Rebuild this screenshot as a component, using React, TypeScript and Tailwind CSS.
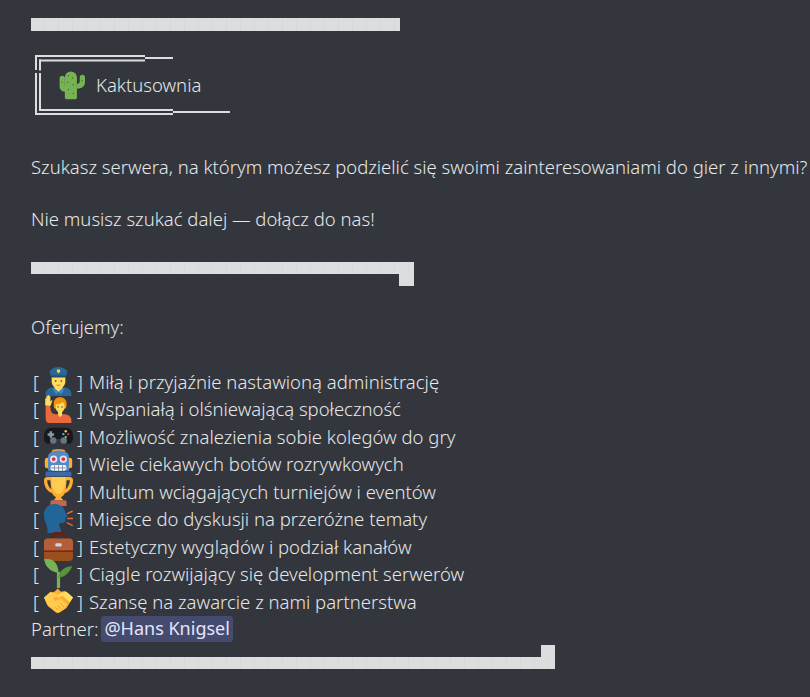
const seam = "bg-[#dcddde] bg-[repeating-linear-gradient(90deg,#dcddde_0px,#dcddde_13px,#d7d8da_13px,#d7d8da_14px)]";

function Bar({ width, tail, tall }: { width: string; tail?: "up" | "down"; tall?: boolean }) {
  return (
    <div className={`flex flex-col ${width}`}>
      {tail === "up" && <div className="w-[14px] h-3 self-end bg-[#dcddde]" />}
      <div className={`${tall ? "h-[13px]" : "h-3"} w-full ${seam}`} />
      {tail === "down" && <div className="w-[15px] h-3 self-end bg-[#dcddde]" />}
    </div>
  );
}

const Frame = () => (
  <svg width="210" height="64" viewBox="0 0 210 64" className="absolute left-0 top-0" fill="#dcddde">
    <rect x="4" y="0" width="110" height="2" />
    <rect x="114" y="2" width="28" height="2" />
    <rect x="8" y="4.500" width="106" height="2" />
    <rect x="4" y="0" width="2" height="15" />
    <rect x="8" y="4.500" width="2" height="11" />
    <rect x="4" y="18" width="2" height="27" />
    <rect x="8" y="18" width="2" height="27" />
    <rect x="4" y="45" width="2" height="15" />
    <rect x="8" y="45" width="2" height="11" />
    <rect x="8" y="54" width="134" height="2" />
    <rect x="4" y="58" width="138" height="2" />
    <rect x="142" y="56" width="57" height="2" />
  </svg>
);

const Cactus = () => (
  <svg width="29" height="29" viewBox="0 0 36 36">
    <path fill="#77B255" d="M8.500 8a7.500 7.500 0 0 1 15 0v25a2 2 0 0 1-2 2h-11a2 2 0 0 1-2-2V8z" />
    <path fill="#77B255" d="M2 9a3.200 3.200 0 0 1 6.500 0v9c0 1 1 2 2 2v6c-5 0-8.500-2-8.500-7V9zM27 8a3.200 3.200 0 0 1 6.500 0v6c0 5-4 8-10 8v-6c2 0 3.500-1 3.500-3V8z" />
    <g fill="#3E721D">
      <circle cx="13" cy="6" r=".9" /><circle cx="18" cy="9" r=".9" /><circle cx="12" cy="14" r=".9" /><circle cx="19" cy="17" r=".9" /><circle cx="13" cy="23" r=".9" /><circle cx="19" cy="28" r=".9" /><circle cx="5" cy="14" r=".8" /><circle cx="30" cy="12" r=".8" />
    </g>
  </svg>
);

const Police = () => (
  <svg width="29" height="29" viewBox="0 0 36 36" className="overflow-visible">
    <path fill="#2A6797" d="M2 36v-3c0-5 5-8 9-8h14c4 0 9 3 9 8v3H2z" />
    <path fill="#FFDC5D" d="M13 21h10v6l-5 4-5-4z" />
    <path fill="#4289C1" d="M13 26l5 5-3 3-4-6zM23 26l-5 5 3 3 4-6z" />
    <path fill="#FFDC5D" d="M9.500 12h17v6c0 5-4 8.500-8.500 8.500S9.500 23 9.500 18z" />
    <circle cx="14.500" cy="17.500" r="1" fill="#662113" /><circle cx="21.500" cy="17.500" r="1" fill="#662113" />
    <path fill="#C1694F" d="M15 22h6c-1 1.500-5 1.500-6 0z" />
    <path fill="#2A6797" d="M7 5c2-3 7-5 11-5s9 2 11 5c0 2-1 5-2 7H9C8 10 7 7 7 5z" />
    <path fill="#1C4F75" d="M9 10.500h18v2.500H9z" />
    <path fill="#FFCC4D" d="M16 3h4v3l-2 2-2-2z" />
  </svg>
);

const Raise = () => (
  <svg width="29" height="29" viewBox="0 0 36 36">
    <path fill="#E9683C" d="M2 30V13l5 0 2 9c1 2 3 3 5 3h11c5 0 9 3 9 7v4H6c-2 0-4-2-4-6z" />
    <path fill="#FFDC5D" d="M1.500 14V6c0-.8 1.500-.8 1.500 0V3c0-.9 1.600-.9 1.600 0V2c0-.9 1.700-.9 1.700 0v1c0-.9 1.600-.7 1.600.2V10l1-2c.6-.8 1.800-.2 1.400.7L8 15l-6.500-1z" />
    <path fill="#FFDC5D" d="M17.500 21h5v5l-2.500 3-2.500-3z" />
    <path fill="#F4900C" d="M12 12c0-5 3-8 8-8s8 3 8 8c0 2 0 4-1 6H13c-1-2-1-4-1-6z" />
    <path fill="#FFDC5D" d="M14.500 13c2 0 7-1 9-3l2 3v4c0 3-3 6-5.500 6s-5.500-3-5.500-6v-4z" />
    <circle cx="17.500" cy="16" r=".9" fill="#662113" /><circle cx="22.500" cy="16" r=".9" fill="#662113" />
  </svg>
);

const Pad = () => (
  <svg width="29" height="29" viewBox="0 0 36 36">
    <path fill="#17191C" d="M9 7h18c5 0 9 4 9 10v3c0 4-2 7-5 7-2 0-4-1-5-3-1-2-3-3-5-3h-6c-2 0-4 1-5 3-1 2-3 3-5 3-3 0-5-3-5-7v-3C0 11 4 7 9 7z" />
    <circle cx="11.500" cy="23" r="4" fill="#66757F" /><circle cx="24.500" cy="23" r="4" fill="#66757F" />
    <path fill="#8899A6" d="M7 11.500h3v2.500h2.500v3H10v2.500H7V17H4.500v-3H7z" />
    <circle cx="27" cy="11.500" r="1.500" fill="#FFCC4D" /><circle cx="24" cy="15" r="1.500" fill="#55ACEE" /><circle cx="30" cy="15" r="1.500" fill="#DD2E44" /><circle cx="27" cy="18.500" r="1.500" fill="#77B255" />
  </svg>
);

const Robot = () => (
  <svg width="29" height="29" viewBox="0 0 36 36">
    <path fill="#FFAC33" d="M1 14a3 3 0 0 1 3-3h4v13H4a3 3 0 0 1-3-3v-7zM35 14a3 3 0 0 0-3-3h-4v13h4a3 3 0 0 0 3-3v-7z" />
    <path fill="#FFAC33" d="M10 1.500c3-1.500 13-1.500 16 0V5H10z" />
    <path fill="#5588C8" d="M5 10c0-5 5-8 13-8s13 3 13 8v17H5z" />
    <path fill="#3B6AA6" d="M2 28h32v6H2z" />
    <circle cx="12" cy="12.500" r="4.500" fill="#E1E8ED" /><circle cx="24" cy="12.500" r="4.500" fill="#E1E8ED" />
    <circle cx="12" cy="12.500" r="2.400" fill="#DD2E44" /><circle cx="24" cy="12.500" r="2.400" fill="#DD2E44" />
    <rect x="8" y="20" width="20" height="7" rx="3" fill="#F5F8FA" />
    <path stroke="#66757F" strokeWidth=".9" d="M13 20v7M18 20v7M23 20v7M8 23.500h20" />
  </svg>
);

const Trophy = () => (
  <svg width="29" height="29" viewBox="0 0 36 36">
    <path fill="#FFAC33" d="M4 0h28c2 0 4 1 4 4 0 8-4 14-10 16-1 3-3 4-5 5v4h-6v-4c-2-1-4-2-5-5C4 18 0 12 0 4c0-3 2-4 4-4zm0 4c0 4 2 9 5 11-.5-3-1-8-1-11H4zm24 0c0 3-.5 8-1 11 3-2 5-7 5-11h-4z" />
    <path fill="#FFCC4D" d="M9 0h18c0 11-3 21-9 21S9 11 9 0z" />
    <path fill="#FFAC33" d="M15 25h6l3 4H12z" />
    <path fill="#C1694F" d="M10 29h16c1.500 0 2 1 2 3v4H8v-4c0-2 .5-3 2-3z" />
  </svg>
);

const Head = () => (
  <svg width="29" height="29" viewBox="0 0 36 36">
    <path fill="#226699" d="M13 0c7 0 12 4 13 9 .3 2 2.500 5 3 6 .4 1-1 1.500-2.500 2 .5 2 .5 4-.5 5-1 1.500-4 1.500-6 1.500-1 0-1.500 3-.5 5 1 2.500 2 4.500 2 7.500H4c1-5-.5-9-2-13C.5 20 0 17 0 13 0 5 6 0 13 0z" />
    <path stroke="#E9683C" strokeWidth="1.800" strokeLinecap="round" fill="none" d="M29 12l6-3M29.500 18H36M29 23.500l6 3" />
  </svg>
);

const Case = () => (
  <svg width="29" height="29" viewBox="0 0 36 36">
    <path fill="#662113" d="M13 0h10c2 0 4 2 4 4v5h-3V5c0-.6-.4-1-1-1H13c-.6 0-1 .4-1 1v4H9V4c0-2 2-4 4-4z" />
    <path fill="#9B4F1D" d="M0 12c0-2 2-4 4-4h28c2 0 4 2 4 4v20c0 2-2 4-4 4H4c-2 0-4-2-4-4z" />
    <path fill="#C1694F" d="M0 12c0-2 2-4 4-4h28c2 0 4 2 4 4v9c0 1-1 2-2 2H2c-1 0-2-1-2-2z" opacity=".6" />
    <path fill="#662113" d="M0 23h36v1.500H0z" />
    <rect x="14" y="14" width="8" height="4" rx="1.500" fill="#CCD6DD" />
  </svg>
);

const Plant = () => (
  <svg width="29" height="29" viewBox="0 0 36 36">
    <path fill="#77B255" d="M16 36V16h4v20z" />
    <path fill="#77B255" d="M0 0c6-1 12 1 15 6 2 3 3 7 3 11-5 0-10-2-13-6C2 8 1 4 0 0z" />
    <path fill="#5C913B" d="M35 9c-5 0-10 2-13 5-2 2-4 6-4 9 4 0 8-2 11-5 3-3 5-6 6-9z" />
  </svg>
);

const Shake = () => (
  <svg width="29" height="29" viewBox="0 0 36 36">
    <path fill="#FFAC33" d="M14 5l3-3 4 4 5-1 10 8-8 13-9 6c-2 1-4 0-5-1l-9-7-5-11z" />
    <path fill="#FFCC4D" d="M0 13l8-7 7 2 3 1-6 5c-1 1 0 3 2 3l7-2 8 7-5 6-6 3c-2 .5-4-.5-5-2L4 22z" />
    <path fill="#FFDC5D" d="M36 13l-8-7-7 1-6 5 3 1 5-2 9 8z" />
    <path stroke="#F4900C" strokeWidth="1" fill="none" d="M20 20l5 5M17 23l5 5M14 25l4 4" />
  </svg>
);

const rows: [React.ReactNode, string][] = [
  [<Police />, "Miłą i przyjaźnie nastawioną administrację"],
  [<Raise />, "Wspaniałą i olśniewającą społeczność"],
  [<Pad />, "Możliwość znalezienia sobie kolegów do gry"],
  [<Robot />, "Wiele ciekawych botów rozrywkowych"],
  [<Trophy />, "Multum wciągających turniejów i eventów"],
  [<Head />, "Miejsce do dyskusji na przeróżne tematy"],
  [<Case />, "Estetyczny wyglądów i podział kanałów"],
  [<Plant />, "Ciągle rozwijający się development serwerów"],
  [<Shake />, "Szansę na zawarcie z nami partnerstwa"],
];

export default function App() {
  return (
    <div className="w-[810px] h-[697px] overflow-hidden bg-[#33363d] pl-[31px] pt-[18px] text-[#e6e7e8] text-[18.5px] leading-[27.5px] font-['Noto_Sans','Open_Sans',sans-serif] font-light whitespace-nowrap">
      <Bar width="w-[369px]" tall />
      <div className="relative mt-[24px] h-[60px] flex items-center pl-[27px]">
        <Frame />
        <Cactus />
        <span className="ml-[9px]">Kaktusownia</span>
      </div>
      <div className="mt-[38px]">Szukasz serwera, na którym możesz podzielić się swoimi zainteresowaniami do gier z innymi?</div>
      <div className="mt-[24px]">Nie musisz szukać dalej — dołącz do nas!</div>
      <div className="mt-[30px]"><Bar width="w-[383px]" tail="down" /></div>
      <div className="mt-[27px]">Oferujemy:</div>
      <div className="mt-[27px] flex flex-col">
        {rows.map(([icon, text]) => (
          <div key={text} className="flex h-[27.5px] items-center">
            <span className="ml-[2px] w-[11px]">[</span>
            <span className="w-[29px] h-[29px] shrink-0">{icon}</span>
            <span className="ml-[4px] w-[12px]">]</span>
            <span>{text}</span>
          </div>
        ))}
        <div className="flex h-[27.5px] items-center">
          <span>Partner:</span>
          <span className="ml-[3px] px-[3px] h-[26px] flex items-center rounded-[3px] bg-[#454b6e] text-[#e3e5fb] text-[18px] font-normal">@Hans Knigsel</span>
        </div>
      </div>
      <div className="mt-[2px]"><Bar width="w-[524px]" tail="up" /></div>
    </div>
  );
}
